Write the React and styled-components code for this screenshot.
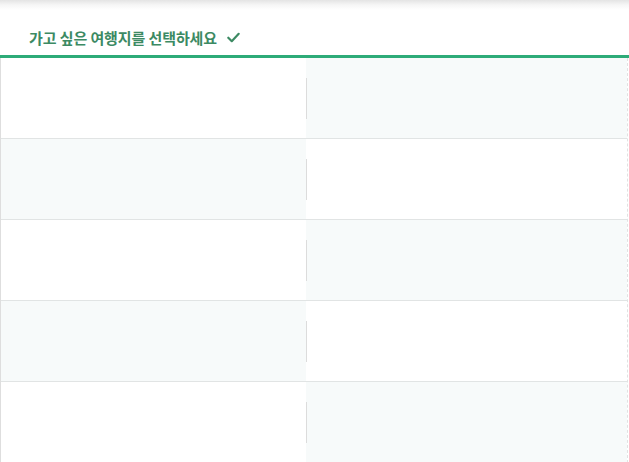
import React from 'react'
import styled, { createGlobalStyle } from 'styled-components'

const GlobalStyle = createGlobalStyle`
  html, body { margin: 0; padding: 0; background: #fff; }
  body { font-family: "Noto Sans CJK KR", "Noto Sans", sans-serif; }
`

const Page = styled.div`
  width: 629px;
  height: 462px;
  overflow: hidden;
  background: #fff;
`

const Header = styled.div`
  height: 58px;
  display: flex;
  align-items: center;
  padding: 20px 0 0 29px;
  box-sizing: border-box;
  background: linear-gradient(to bottom, #e4e4e4 0px, #f6f6f6 5px, #fff 10px);
  border-bottom: 3px solid #2dab78;
`

const Title = styled.h2`
  margin: 0;
  font-size: 15px;
  font-weight: 700;
  color: #3c8a63;
  letter-spacing: -0.1px;
  display: flex;
  align-items: center;
  gap: 10px;
`

const Grid = styled.div`
  display: grid;
  grid-template-columns: 305px 1fr;
  border-left: 1px solid #dedede;
  border-right: 1px dashed #e2e2e2;
  margin-right: 1px;
`

const Cell = styled.div`
  height: 80px;
  border-bottom: 1px solid #e1e4e4;
  background: ${p => (p.$shade ? '#f7fafa' : '#fff')};
  position: relative;
  ${p => p.$right && `
    &::before {
      content: '';
      position: absolute;
      left: 0;
      top: 20px;
      width: 1px;
      height: 41px;
      background: #dcdcdc;
    }
  `}
`

const Check = () => (
  <svg width="13" height="11" viewBox="0 0 12 10">
    <path d="M1.2 5.2 L4.4 8.4 L10.8 1.6" fill="none" stroke="#3c8a63" strokeWidth="2" strokeLinecap="round" strokeLinejoin="round" />
  </svg>
)

const rows = [0, 1, 2, 3, 4]

export default function App() {
  return (
    <Page>
      <GlobalStyle />
      <Header>
        <Title>가고 싶은 여행지를 선택하세요 <Check /></Title>
      </Header>
      <Grid>
        {rows.map(i => (
          <React.Fragment key={i}>
            <Cell $shade={i % 2 === 1} />
            <Cell $right $shade={i % 2 === 0} />
          </React.Fragment>
        ))}
      </Grid>
    </Page>
  )
}
